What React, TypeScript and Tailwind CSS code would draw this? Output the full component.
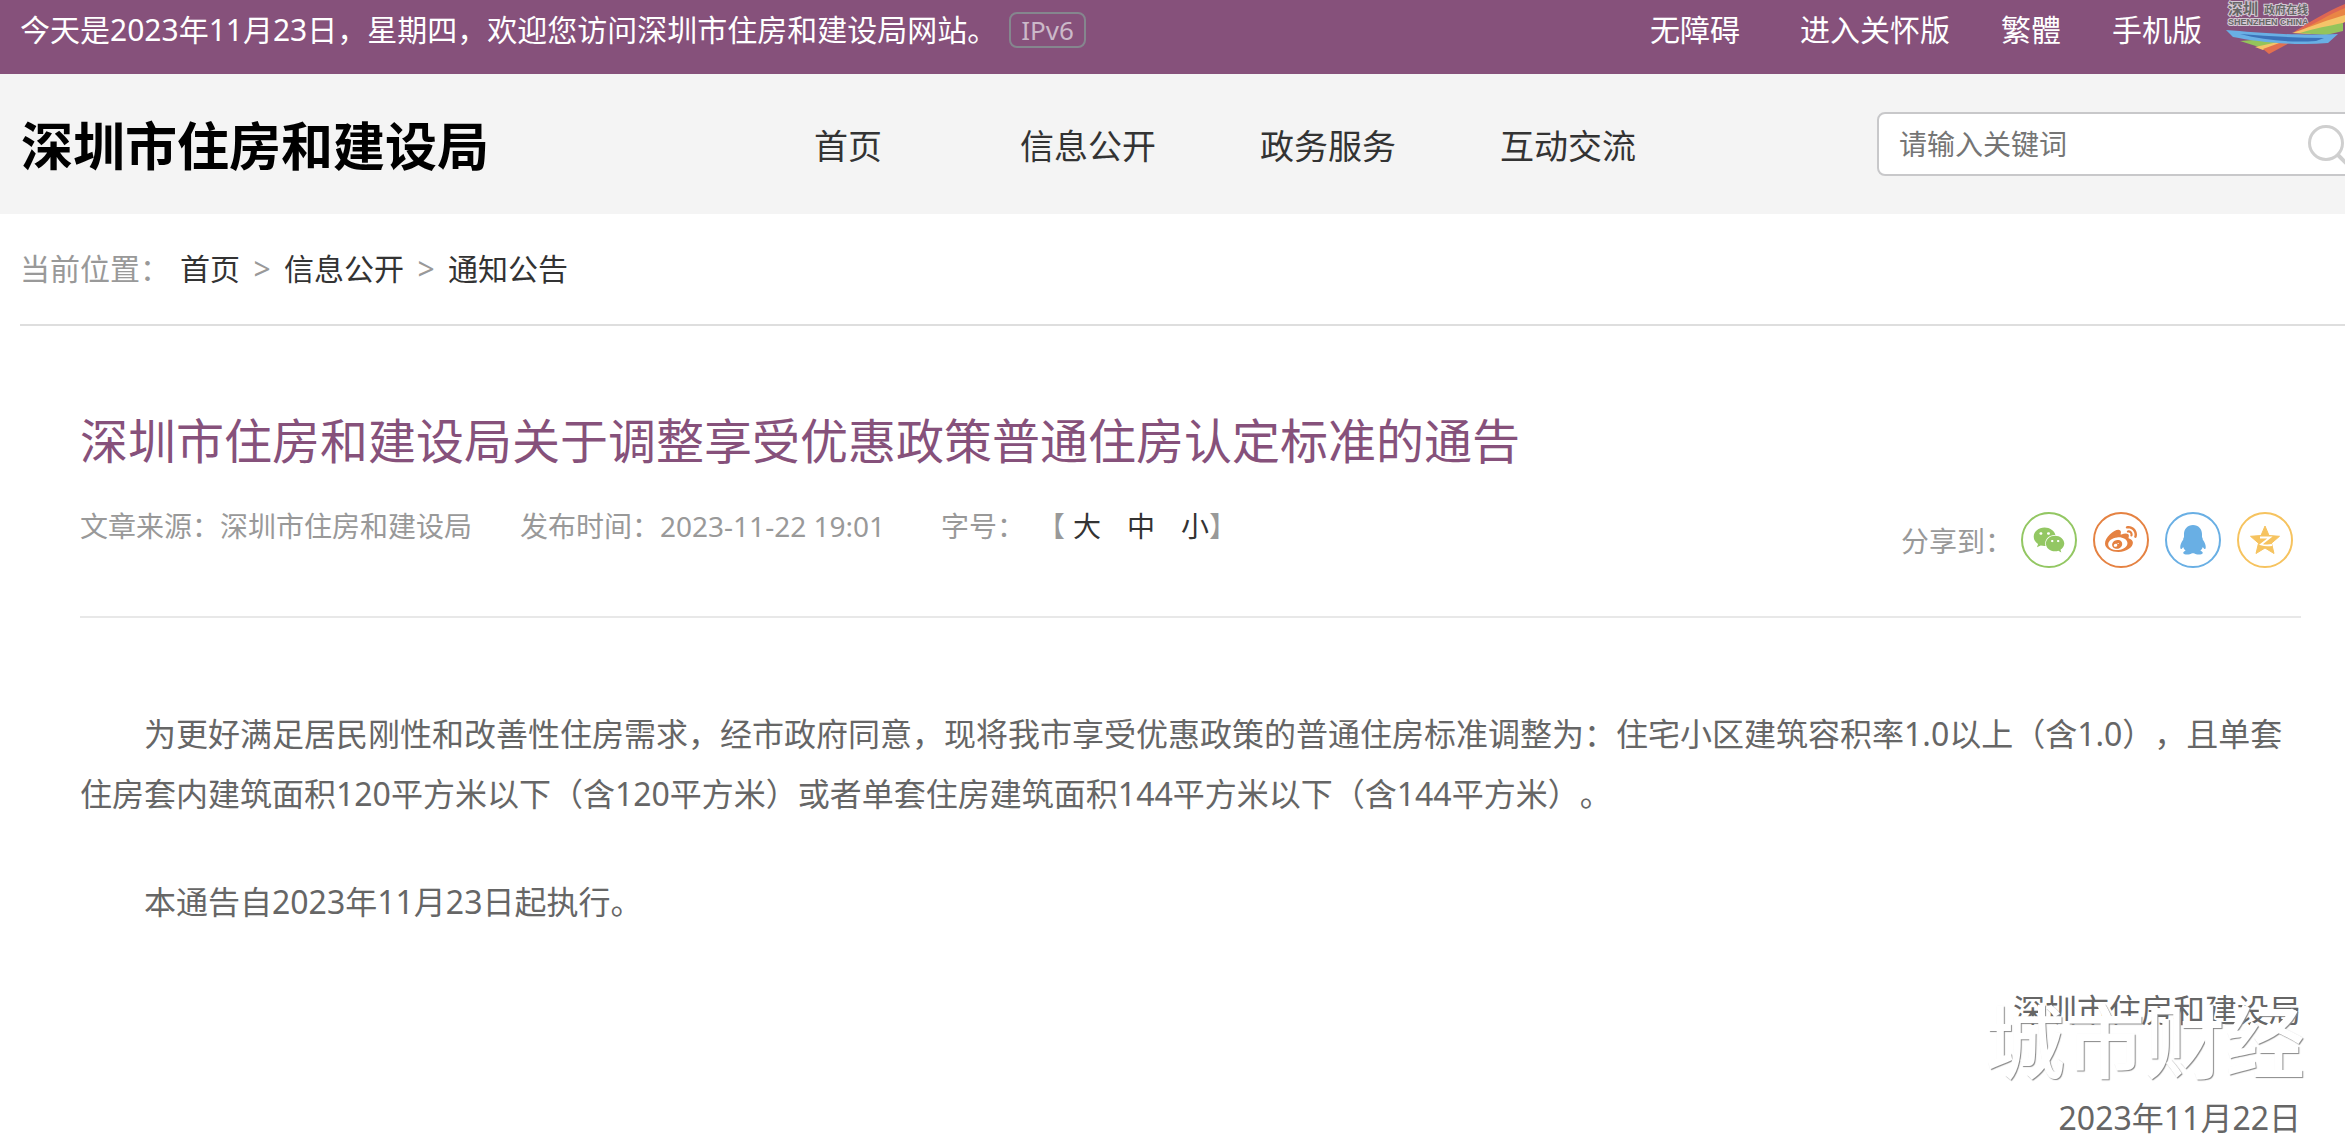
import { ReactNode } from "react";
import { FaWeibo, FaWeixin } from "react-icons/fa";

const navItems = ["首页", "信息公开", "政务服务", "互动交流"];
const fontSizes = ["大", "中", "小"];

function TopBar() {
    return (
        <div className="flex h-[74px] items-start justify-between overflow-hidden bg-[#86517b] pl-5 text-[30px] leading-[60px] whitespace-nowrap text-white">
            <div className="flex items-center">
                <p>今天是2023年11月23日，星期四，欢迎您访问深圳市住房和建设局网站。</p>
                <span className="ml-3 rounded-lg border-2 border-[#85868e] px-[10px] text-[26px] leading-8 text-[#cbb9c9]">
                    IPv6
                </span>
            </div>
            <div className="flex items-start">
                <a href="#" className="mr-[60px]">无障碍</a>
                <a href="#" className="mr-[51px]">进入关怀版</a>
                <a href="#" className="mr-[51px]">繁體</a>
                <a href="#" className="mr-6">手机版</a>
                <a href="#" aria-label="政府在线">
                    <PortalLogo />
                </a>
            </div>
        </div>
    );
}

function PortalLogo() {
    return (
        <svg width="119" height="56" viewBox="0 0 119 56">
            <g fill="#666" stroke="#d5c9d4" strokeWidth="2" paintOrder="stroke" fontWeight="bold">
                <g fontFamily="'Noto Sans CJK SC', sans-serif">
                    <text x="2" y="14" fontSize="15">深圳</text>
                    <text x="38" y="14" fontSize="11">政府在线</text>
                </g>
                <text x="2" y="25" fontSize="9" fontFamily="'Liberation Sans', sans-serif">SHENZHEN CHINA</text>
            </g>
            <path d="M119 4 C100 12 84 22 68 32 L80 33 C96 26 108 18 119 12Z" fill="#dd6653" />
            <path d="M119 8 C102 15 88 24 72 32 L86 33 C98 28 109 22 119 16Z" fill="#e98545" />
            <path d="M119 15 C104 19 84 27 66 33 L84 34 C98 30 110 27 119 22Z" fill="#f5c469" />
            <path d="M117 23 C102 26 90 28 74 33 L100 35 L117 31Z" fill="#94c45b" />
            <path d="M14 41 L40 39 L56 42 L33 47Z" fill="#94c45b" />
            <path d="M29 47 L52 42 L60 42 L37 50Z" fill="#f5c469" />
            <path d="M37 49 L56 42 L65 42 L43 54Z" fill="#e2704f" />
            <path d="M0 30 C28 32 62 36 112 34 L102 43 C70 46 32 42 7 37Z" fill="#69afe4" />
            <path d="M14 34 C42 36 70 38 98 38 L90 41 C64 43 38 40 14 34Z" fill="#3b72b9" />
        </svg>
    );
}

function Header() {
    return (
        <header className="grid h-[140px] grid-cols-[707px_960px_1fr] items-center bg-[#f4f4f4] pl-[21px]">
            <h2 className="pt-1 text-[52px] leading-[72px] font-bold text-black">深圳市住房和建设局</h2>
            <nav className="grid grid-cols-4 pt-1 text-center text-[34px] leading-12 text-[#333]">
                {navItems.map((item) => (
                    <a key={item} href="#">{item}</a>
                ))}
            </nav>
            <form className="overflow-hidden pl-[189px]">
                <div className="flex h-16 w-[500px] items-center rounded-lg border-2 border-[#c8c8ca] bg-white pl-5">
                    <input
                        type="text"
                        aria-label="请输入关键词"
                        placeholder="请输入关键词"
                        className="w-[409px] shrink-0 text-[28px] leading-10 outline-none placeholder:text-[#757575]"
                    />
                    <button type="button" aria-label="搜索" className="shrink-0">
                        <svg width="46" height="46" viewBox="0 0 46 46" fill="none" stroke="#cfcfcf" strokeWidth="3">
                            <circle cx="18" cy="22" r="16.5" />
                            <path d="M30 34 L40 44" strokeWidth="4" />
                        </svg>
                    </button>
                </div>
            </form>
        </header>
    );
}

function Breadcrumb() {
    return (
        <div className="ml-5 flex h-[112px] items-center border-b-2 border-[#dedede] text-[30px] leading-10 text-[#999]">
            <span className="mr-[10px]">当前位置：</span>
            <a href="#" className="text-[#333]">首页</a>
            <span className="w-11 text-center">&gt;</span>
            <a href="#" className="text-[#333]">信息公开</a>
            <span className="w-11 text-center">&gt;</span>
            <a href="#" className="text-[#333]">通知公告</a>
        </div>
    );
}

interface ShareButtonProps {
    label: string;
    className: string;
    children: ReactNode;
}

function ShareButton({ label, className, children }: ShareButtonProps) {
    return (
        <button
            type="button"
            title={label}
            className={`flex size-14 items-center justify-center rounded-full border-2 ${className}`}
        >
            {children}
        </button>
    );
}

function ShareBar() {
    return (
        <div className="mr-2 flex items-center gap-2 text-[28px] leading-10">
            <span className="pt-[2px]">分享到：</span>
            <div className="flex gap-4">
                <ShareButton label="微信" className="border-[#93c763] text-[#93c763]">
                    <FaWeixin className="size-8" />
                </ShareButton>
                <ShareButton label="微博" className="border-[#e58242] text-[#e58242]">
                    <FaWeibo className="size-8" />
                </ShareButton>
                <ShareButton label="QQ" className="border-[#69afe4] text-[#69afe4]">
                    <svg width="26" height="30" viewBox="0 0 26 30" fill="currentColor">
                        <path d="M13 0 C7.500 0 4 4 4 9 L4 12 C3.500 13 3.200 13.500 3.300 14.500 C1 17.500 0 20.500 .3 23 C.6 25 2 24 3.200 22 C3.600 23.500 4.400 24.600 5.600 25.700 C3.700 26.400 3 27.300 3.300 28.300 C4 30 10 30 12 28.200 L14 28.200 C16 30 22 30 22.700 28.300 C23 27.300 22.300 26.400 20.400 25.700 C21.600 24.600 22.400 23.500 22.800 22 C24 24 25.400 25 25.700 23 C26 20.500 25 17.500 22.700 14.500 C22.800 13.500 22.500 13 22 12 L22 9 C22 4 18.500 0 13 0Z" />
                    </svg>
                </ShareButton>
                <ShareButton label="QQ空间" className="border-[#f6c35f] text-[#f6c35f]">
                    <svg width="30" height="30" viewBox="0 0 30 30">
                        <path
                            d="M15 1 L19 10.500 L29.500 11.300 L21.500 18.200 L24 28.500 L15 23 L6 28.500 L8.500 18.200 L.5 11.300 L11 10.500Z"
                            fill="currentColor"
                            stroke="currentColor"
                            strokeLinejoin="round"
                        />
                        <path d="M10 12.500 L20 12.500 L11 19.500 Q16 21 22 20" fill="none" stroke="#fff" strokeWidth="1.8" />
                    </svg>
                </ShareButton>
            </div>
        </div>
    );
}

function Article() {
    return (
        <article className="mr-11 ml-20">
            <div className="flex h-[292px] items-start justify-between border-b-2 border-[#e8e8e8] text-[#999]">
                <div className="pt-[82px]">
                    <h1 className="text-[48px] leading-[66px] text-[#86517b]">
                        深圳市住房和建设局关于调整享受优惠政策普通住房认定标准的通告
                    </h1>
                    <div className="mt-8 flex text-[28px] leading-10">
                        <span className="mr-12">文章来源：深圳市住房和建设局</span>
                        <span className="mr-14">发布时间：2023-11-22 19:01</span>
                        <span>字号：</span>
                        <span className="mr-2 ml-3">【</span>
                        <div className="flex gap-[26px] text-[#333]">
                            {fontSizes.map((size) => (
                                <button key={size} type="button">{size}</button>
                            ))}
                        </div>
                        <span>】</span>
                    </div>
                </div>
                <div className="pt-[186px]">
                    <ShareBar />
                </div>
            </div>

            <div className="space-y-12 pt-[86px] text-[32px] leading-[60px] text-[#666]">
                <p className="indent-16">
                    为更好满足居民刚性和改善性住房需求，经市政府同意，现将我市享受优惠政策的普通住房标准调整为：住宅小区建筑容积率1.0以上（含1.0），且单套住房套内建筑面积120平方米以下（含120平方米）或者单套住房建筑面积144平方米以下（含144平方米）。
                </p>
                <p className="indent-16">本通告自2023年11月23日起执行。</p>
                <div className="relative text-right">
                    <p>深圳市住房和建设局</p>
                    {/* Watermark */}
                    <span className="absolute -right-1 top-4 text-[80px] leading-[90px] font-medium text-white [text-shadow:1px_1px_1px_#888]">
                        城市财经
                    </span>
                </div>
                <p className="text-right">2023年11月22日</p>
            </div>
        </article>
    );
}

export default function App() {
    return (
        <div className="overflow-hidden bg-white font-['Noto_Sans','Noto_Sans_CJK_SC',sans-serif] [text-spacing-trim:space-all]">
            <TopBar />
            <Header />
            <Breadcrumb />
            <Article />
        </div>
    );
}
